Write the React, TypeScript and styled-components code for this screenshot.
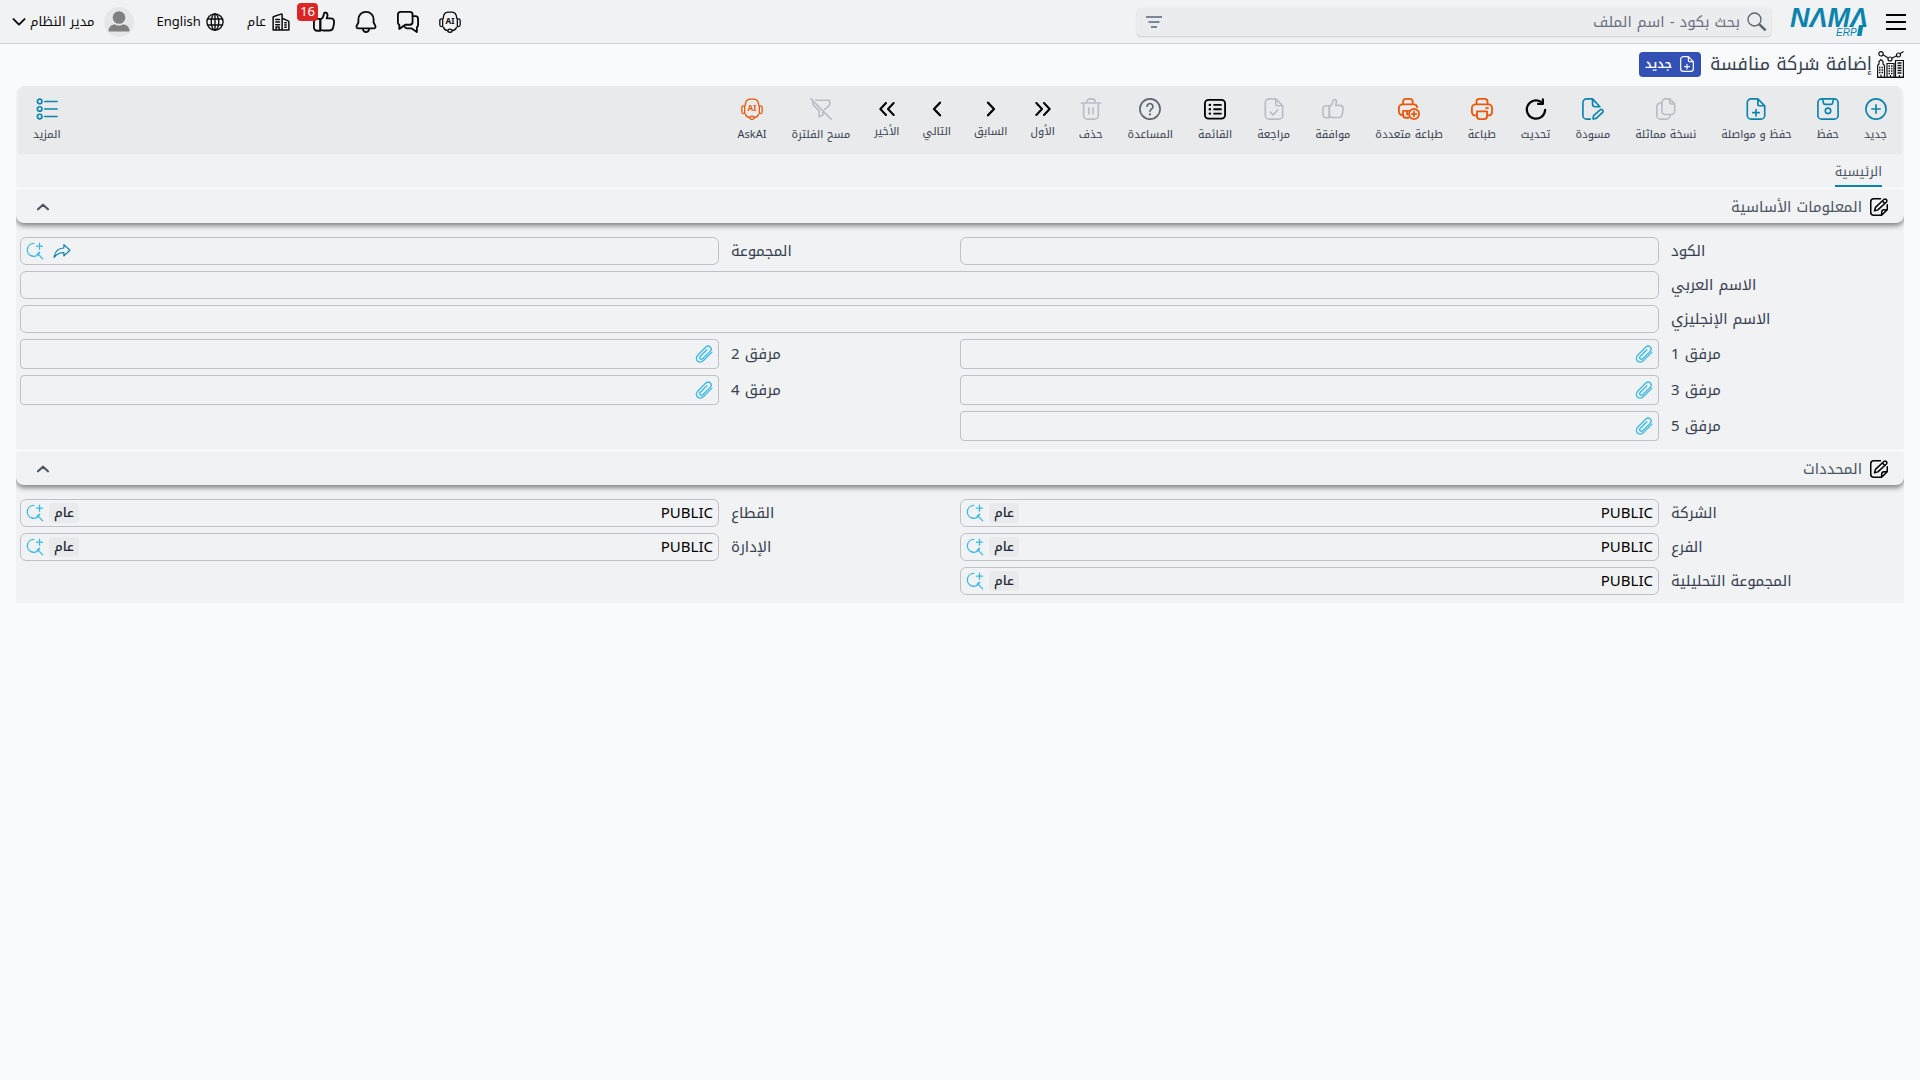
import React, { useId } from "react";
import styled, { createGlobalStyle, css } from "styled-components";

const color = {
  page: "#f8fafc",
  panel: "#f0f2f4",
  toolbar: "#e8eaeb",
  field: "#bfc1c4",
  text: "#374151",
  muted: "#4b5563",
  teal: "#0b84ad",
  sky: "#3db9e4",
  orange: "#ea580c",
  disabled: "#b9bdc6",
  ink: "#0b0b0c",
};

const GlobalStyle = createGlobalStyle`
  *, *::before, *::after { box-sizing: border-box; }
  body {
    margin: 0;
    background: ${color.page};
    color: ${color.text};
    font-family: "Noto Kufi Arabic", "Noto Sans", "DejaVu Sans", sans-serif;
    font-size: 15px;
    line-height: 20px;
  }
  button, input { font: inherit; color: inherit; }
  button { background: none; border: 0; padding: 0; cursor: pointer; }
  a { color: inherit; text-decoration: none; }
  svg { display: block; flex: none; }
`;

/* ---------- icons ---------- */

type IconProps = { size?: number; width?: number; children: React.ReactNode };

const Icon = ({ size = 22, width = 1.8, children }: IconProps) => (
  <svg
    width={size}
    height={size}
    viewBox="0 0 24 24"
    fill="none"
    stroke="currentColor"
    strokeWidth={width}
    strokeLinecap="round"
    strokeLinejoin="round"
    aria-hidden="true"
  >
    {children}
  </svg>
);

const PlusCircle = () => (
  <Icon>
    <circle cx="12" cy="12" r="11" />
    <path d="M12 7.500v9M7.500 12h9" />
  </Icon>
);
const Save = () => (
  <Icon>
    <path d="M5 1h14a4 4 0 0 1 4 4v14a4 4 0 0 1-4 4H5a4 4 0 0 1-4-4V5a4 4 0 0 1 4-4z" />
    <path d="M6 1l1 4.500q.3 1.500 1.800 1.500h6.400q1.500 0 1.800-1.500L18 1" />
    <circle cx="12" cy="14" r="3" />
  </Icon>
);
const page = "M14 1H6.500A4 4 0 0 0 2.500 5v14a4 4 0 0 0 4 4h11a4 4 0 0 0 4-4V8.500zM14 1v5.500a2 2 0 0 0 2 2h5.500";
const FilePlus = ({ size = 22 }: { size?: number }) => (
  <Icon size={size}>
    <path d={page} />
    <path d="M12 12.500v7M8.500 16h7" />
  </Icon>
);
const FileCheck = () => (
  <Icon>
    <path d={page} />
    <path d="M8 15.500l3 3 5-5.500" />
  </Icon>
);
const Copy = () => (
  <Icon>
    <path d="M16 1h-4.500A4 4 0 0 0 7.500 5v9a4 4 0 0 0 4 4h6a4 4 0 0 0 4-4V6.500zM16 1v3.500a2 2 0 0 0 2 2h3.500" />
    <path d="M7.500 5.500H6a4 4 0 0 0-4 4V19a4 4 0 0 0 4 4h6.500a4 4 0 0 0 4-4v-1" />
  </Icon>
);
const Draft = () => (
  <Icon>
    <path d="M9 23H5a4 4 0 0 1-4-4V5a4 4 0 0 1 4-4h6.500l8 8.500M11.500 1v5.500a3 3 0 0 0 3 3h5" />
    <path d="M12 22.800l.6-3.600 7.200-6.300q1.400-1 2.600.2t.1 2.600l-7 6.500z" />
  </Icon>
);
const Refresh = () => (
  <Icon width={2.4}>
    <path d="M22 13a10 10 0 1 1-4.500-8.800" />
    <path d="M19.500 1.500v5h-5.200" />
  </Icon>
);
const Printer = () => (
  <Icon width={2}>
    <path d="M6 6.500V4a3 3 0 0 1 3-3h6a3 3 0 0 1 3 3v2.500" />
    <path d="M6 19H4.500A3.500 3.500 0 0 1 1 15.500V11a4 4 0 0 1 4-4h14a4 4 0 0 1 4 4v4.500a3.500 3.500 0 0 1-3.500 3.500H18" />
    <path d="M6.500 14.500h11V20a3 3 0 0 1-3 3h-5a3 3 0 0 1-3-3zM16.500 11h2" />
  </Icon>
);
const PrinterPlus = () => (
  <Icon width={2}>
    <path d="M5.500 6.500V4a3 3 0 0 1 3-3H13a3 3 0 0 1 3 3v2.500" />
    <path d="M5.500 18.500H4.500A3.500 3.500 0 0 1 1 15V11a4 4 0 0 1 4-4h12a4 4 0 0 1 4 3" />
    <path d="M11.500 21.500H8.500a3 3 0 0 1-3-3V14h6.500M10 14v4" />
    <circle cx="17.500" cy="17.500" r="5.500" />
    <path d="M17.500 15v5M15 17.500h5" />
  </Icon>
);
const ThumbUp = ({ width = 1.8 }: { width?: number }) => (
  <Icon width={width}>
    <path d="M8 9.500c2.500-1.500 3.500-3 3.800-5.700.3-3 4-2.800 4 .5 0 1.700-.5 2.700-.9 3.700H19c2.700 0 4 1.500 4 3.700 0 2.500-.6 5.300-1.300 7.300-.6 1.700-1.800 2.300-3.700 2.300h-6.500c-1.600 0-2.500-.3-3.500-.8z" />
    <path d="M8 8.500H4.500A3.500 3.500 0 0 0 1 12v6a3.500 3.500 0 0 0 3.500 3.500H8z" />
  </Icon>
);
const ListBox = () => (
  <Icon width={2}>
    <rect x="1" y="2" width="22" height="20.500" rx="4" />
    <path d="M11 7.500h7.500M11 12.300h7.500M11 17h7.500" />
    <path d="M6.300 7.500h.2M6.300 12.300h.2M6.300 17h.2" strokeWidth="2.600" />
  </Icon>
);
const Help = () => (
  <Icon>
    <circle cx="12" cy="12" r="11" />
    <path d="M8.800 9.200a3.200 3.200 0 1 1 5 2.700c-1.200.8-1.800 1.300-1.800 2.700" />
    <path d="M12 17.900v.1" strokeWidth="2.400" />
  </Icon>
);
const Trash = () => (
  <Icon>
    <path d="M1.500 5.500h21M7.500 5.500V4a3 3 0 0 1 3-3h3a3 3 0 0 1 3 3v1.500M4 5.500V19a4 4 0 0 0 4 4h8a4 4 0 0 0 4-4V5.500M9.700 11v6.500M14.300 11v6.500" />
  </Icon>
);
const First = () => (
  <Icon size={16} width={3}>
    <path d="M2 3l8.500 9L2 21M13.500 3l8.500 9-8.500 9" />
  </Icon>
);
const Prev = () => (
  <Icon size={16} width={3.4}>
    <path d="M7.500 2.500l9 9.500-9 9.500" />
  </Icon>
);
const Next = () => (
  <Icon size={16} width={3.4}>
    <path d="M16.500 2.500l-9 9.500 9 9.500" />
  </Icon>
);
const Last = () => (
  <Icon size={16} width={3}>
    <path d="M10.500 3L2 12l8.500 9M22 3l-8.500 9 8.500 9" />
  </Icon>
);
const FilterOff = () => (
  <Icon>
    <path d="M1 1l22 22M6.500 2.500h13.300q1.800 0 1.800 1.800v2.200q0 1-.8 1.700L16 12.500M3 3.500v2.800q0 1 .8 1.700l4.700 4.500q1.500 1.400 1.500 3V20.500l4-2v-3" />
  </Icon>
);
const AskAi = () => (
  <Icon width={1.4}>
    <path d="M4.800 8V6.500Q5.500 1.200 10.500 1.200h3Q18.500 1.200 19.200 6.500V8" />
    <path d="M4 8.500H2.800Q.9 8.500.9 10.500v4.500q0 2 1.900 2H4zM20 8.500h1.200q1.900 0 1.900 2v4.500q0 2-1.900 2H20z" />
    <path d="M5 18q1 3 4.500 3.400M19 18q-1 3-4.500 3.400" />
    <ellipse cx="12" cy="21.500" rx="2.300" ry="1.700" />
    <text
      x="12"
      y="14.500"
      textAnchor="middle"
      direction="ltr"
      fontSize="9"
      fontWeight="700"
      fontFamily="Noto Sans, sans-serif"
      fill="currentColor"
      stroke="none"
    >
      AI
    </text>
  </Icon>
);
const MoreList = () => (
  <Icon width={1.8}>
    <path d="M9.500 3.800h13.500M9.500 12h13.500M9.500 20.200h13.500" />
    <circle cx="4" cy="3.800" r="2.500" />
    <circle cx="4" cy="12" r="2.500" />
    <circle cx="4" cy="20.200" r="2.500" />
  </Icon>
);
const Chat = () => (
  <Icon width={2}>
    <path d="M4 1h10a3 3 0 0 1 3 3v8a3 3 0 0 1-3 3H9l-6.500 4.500V15A3 3 0 0 1 1 12V4a3 3 0 0 1 3-3z" />
    <path d="M17 5.500h3a3 3 0 0 1 3 3v6.700a3 3 0 0 1-1.300 2.500V23l-5.700-4h-5q-1.500 0-2.500-1.500" />
  </Icon>
);
const Bell = () => (
  <Icon width={2}>
    <path d="M12 1C7 1 3.700 4.500 3.700 9v3.500L1.900 16c-.8 1.800.2 3 1.900 3h16.400c1.700 0 2.700-1.200 1.900-3l-1.800-3.500V9C20.300 4.500 17 1 12 1z" />
    <path d="M8.500 19.500c.5 2.500 2 3.500 3.500 3.500s3-1 3.500-3.500" />
  </Icon>
);
const Building = () => (
  <Icon size={18} width={2}>
    <path d="M1.500 22.500V6q0-1 1-1.300L12 1.500q1.500-.4 1.500 1v20M13.500 7l8 3.500q1 .5 1 1.500v10.500H1.500" />
    <path d="M5 8.500h5M5 12h5M5 15.500h5M17 13h2M17 16h2M17 19h2" />
    <path d="M5.500 22v-3.500h4V22" />
  </Icon>
);
const Globe = () => (
  <Icon size={18} width={1.8}>
    <circle cx="12" cy="12" r="10.800" />
    <ellipse cx="12" cy="12" rx="5" ry="10.800" />
    <path d="M2.500 8h19M2.500 16h19M12 1.200v21.600" />
  </Icon>
);
const Magnifier = () => (
  <Icon size={20} width={1.6}>
    <circle cx="9" cy="9" r="7.800" />
    <path d="M14.800 14.800l7.500 7.300" strokeWidth="3.200" strokeLinecap="butt" />
  </Icon>
);
const FilterLines = () => (
  <svg width="18" height="14" viewBox="0 0 18 14" fill="#7b8794" aria-hidden="true">
    <path d="M1 1h16v2H1zM3.500 6h11v2h-11zM6 11h6v2H6z" />
  </svg>
);
const ChevronUp = () => (
  <Icon size={16} width={3.2}>
    <path d="M4.500 15.500L12 8.500l7.500 7" />
  </Icon>
);
const ChevronDown = () => (
  <Icon size={14} width={3.2}>
    <path d="M2.500 7l9.500 9.500L21.500 7" />
  </Icon>
);
const Clip = () => (
  <Icon size={18} width={1.8}>
    <path d="M22.500 9.500L11.700 20.300c-2.700 2.700-6 3.200-8.300 1s-1.900-5.700.8-8.400L14.500 2.800c1.900-1.800 4.300-1.800 5.900-.2s1.600 4-.3 5.900L10.400 18.100c-1.100 1.100-2.500 1.200-3.500.3s-.9-2.400.2-3.500l8.700-8.700" />
  </Icon>
);
const SearchPlus = () => (
  <Icon size={18} width={1.8}>
    <path d="M10.500 1.800a8.600 8.600 0 1 0 7.800 12M16.500 16.500l5.700 6M14.800 16.200l3-2.500M18 1.500v8M14 5.500h8" />
  </Icon>
);
const Share = () => (
  <Icon size={18} width={1.6}>
    <path d="M14.500 3.500L22.500 11l-8 7.500V14C9 13.800 5 16 1.500 20.500 2.500 13 7 8.300 14.500 8z" />
  </Icon>
);
const EditSquare = () => (
  <Icon size={18} width={2}>
    <path d="M14 1H5a4 4 0 0 0-4 4v14a4 4 0 0 0 4 4h10.500L23 15.500V9M23 15.500h-4a3.500 3.500 0 0 0-3.500 3.500v4" />
    <path d="M6 17l1.300-4.500L18.500 2q1.700-1.300 3.200.1t.2 3.200L10.500 15.800zM16.500 4l3.300 3.300" />
  </Icon>
);
const Competitors = () => (
  <svg width="27" height="27" viewBox="0 0 27 27" fill="none" stroke="#111" strokeWidth="1.200" aria-hidden="true">
    <path d="M.6 26.400V14.500l1.400-1.500V10.500L4 8.500l2 2V13l1.500 1.500v11.900zM18.500 26.400V9.500h7.900v16.900zM10 26.400V12.500h7v13.900z" />
    <path d="M2 16.500h4M2 19h4M2 21.500h4M11.500 15h4M11.500 17.500h4M11.500 20h4M11.500 22.500h4" strokeDasharray="1.500 1" strokeWidth="1.500" />
    <path d="M20.500 12h4M20.500 14.500h4M20.500 17h4M20.500 19.500h4M20.500 22h4" strokeWidth="1.500" />
    <path d="M4 26.400v-3M13.500 26.400V24M22.500 26.400V24M0 26.400h27" />
    <circle cx="4" cy="2.800" r="2.200" />
    <circle cx="13" cy="8" r="2" />
    <circle cx="21.500" cy="4" r="2" />
    <path d="M6 3.800l5.200 3.200M14.800 7.200l4.900-2.400M23 2.800L26.500.5" />
  </svg>
);
const Person = () => (
  <svg width="22" height="21" viewBox="0 0 22 21" fill="#808080" aria-hidden="true">
    <circle cx="11" cy="6.500" r="6.300" />
    <path d="M.5 20.500c0-4 2-6.500 6-7.300 2.500 1.800 6.500 1.800 9 0 4 .8 6 3.300 6 7.300z" />
  </svg>
);
const Logo = () => (
  <svg width="80" height="42" viewBox="0 0 80 42" fill={color.teal} direction="ltr" role="img" aria-label="NAMA ERP">
    <text x="0" y="26" fontFamily="Liberation Sans, sans-serif" fontStyle="italic" fontWeight="700" fontSize="27">
      NΛMΛ
    </text>
    <text x="46" y="35" fontFamily="Liberation Sans, sans-serif" fontStyle="italic" fontSize="10">
      ERP
    </text>
    <path d="M69 24h4.500l-2 11h-4.500z" />
  </svg>
);

/* ---------- top bar ---------- */

const Header = styled.header`
  display: flex;
  align-items: center;
  justify-content: space-between;
  height: 44px;
  padding: 0 14px 0 12px;
  background: ${color.panel};
  border-bottom: 1px solid #cdd0d4;
  color: ${color.ink};
`;
const HeaderGroup = styled.div<{ $gap: number }>`
  display: flex;
  align-items: center;
  gap: ${(p) => p.$gap}px;
`;
const StartGroup = styled(HeaderGroup)`
  flex: 1;
`;
const MenuButton = styled.button`
  display: grid;
  gap: 5px;
  width: 20px;
  margin-left: 16px;
  span {
    height: 2px;
    background: #000;
  }
`;
const SearchBox = styled.label`
  display: flex;
  align-items: center;
  gap: 7px;
  flex: 0 1 33vw;
  height: 28px;
  margin-right: 19px;
  padding: 0 4px 0 8px;
  border-radius: 4px;
  background: #ebecee;
  box-shadow: 0 1px 2px rgba(0, 0, 0, 0.16);
  color: #5b6470;
`;
const SearchInput = styled.input`
  flex: 1;
  min-width: 0;
  height: 28px;
  padding: 0;
  border: 0;
  outline: 0;
  background: none;
  &::placeholder {
    color: #6b7280;
    opacity: 1;
  }
`;
const IconButton = styled.button`
  position: relative;
  display: grid;
  place-items: center;
`;
const Count = styled.span`
  position: absolute;
  top: -8px;
  right: 17px;
  padding: 0 3px;
  border-radius: 4px;
  background: #dc2626;
  color: #fff;
  font-size: 13px;
  line-height: 18px;
`;
const TextButton = styled.button<{ $gap: number }>`
  display: flex;
  align-items: center;
  gap: ${(p) => p.$gap}px;
  font-size: 13px;
  line-height: 20px;
  white-space: nowrap;
`;
const Avatar = styled.span`
  display: grid;
  place-items: center;
  width: 30px;
  height: 30px;
  margin-left: 5px;
  border-radius: 50%;
  background: #e5e6e8;
`;

/* ---------- page title ---------- */

const Main = styled.main`
  padding: 0 16px;
`;
const TitleRow = styled.div`
  display: flex;
  align-items: center;
  gap: 5px;
  height: 42px;
  padding: 0 0 2px;
`;
const Title = styled.h1`
  margin: 0 0 0 4px;
  font-size: 18px;
  line-height: 28px;
  font-weight: 400;
  color: ${color.text};
`;
const StatusBadge = styled.span`
  display: flex;
  align-items: center;
  gap: 7px;
  height: 25px;
  padding: 0 6px;
  border-radius: 4px;
  background: #3350b5;
  color: #fff;
  font-size: 12px;
  line-height: 16px;
  font-weight: 600;
`;

/* ---------- toolbar ---------- */

const Panel = styled.section<{ $top?: boolean }>`
  background: ${color.panel};
  border-radius: ${(p) => (p.$top ? "8px 8px 0 0" : "0")};
  margin-bottom: 4px;
  overflow-x: clip;
`;
const Toolbar = styled.div`
  display: flex;
  align-items: center;
  justify-content: space-between;
  height: 68px;
  margin: 0 2px;
  padding: 0 3px;
  border-radius: 8px 8px 0 0;
  background: ${color.toolbar};
`;
const ToolGroup = styled.div`
  display: flex;
  align-items: center;
  gap: 1px;
`;
const tones = {
  teal: color.teal,
  black: "#000",
  orange: color.orange,
  gray: "#5b6472",
  disabled: color.disabled,
};
const ToolButton = styled.button<{ $tone: keyof typeof tones; $compact?: boolean }>`
  display: flex;
  flex-direction: column;
  align-items: center;
  gap: 7px;
  padding: 0 ${(p) => (p.$compact ? 11 : 12)}px;
  color: ${color.text};
  font-size: 11px;
  line-height: 16px;
  white-space: nowrap;
  svg {
    color: ${(p) => tones[p.$tone]};
  }
`;
const Tabs = styled.nav`
  display: flex;
  height: 33px;
  padding: 0 22px;
`;
const Tab = styled.a`
  display: flex;
  align-items: center;
  padding-top: 4px;
  border-bottom: 2px solid ${color.teal};
  color: ${color.muted};
  font-size: 13px;
`;

/* ---------- sections ---------- */

const SectionHeader = styled.div`
  display: flex;
  align-items: center;
  justify-content: space-between;
  height: 32px;
  padding: 0 16px 0 19px;
  border-radius: 0 0 8px 8px;
  background: ${color.panel};
  box-shadow: 0 3px 5px rgba(0, 0, 0, 0.45);
  color: ${color.muted};
`;
const SectionTitle = styled.h2`
  display: flex;
  align-items: center;
  gap: 8px;
  margin: 0;
  font-size: 15px;
  font-weight: 400;
  svg {
    color: #000;
  }
`;
const Fields = styled.div`
  display: grid;
  grid-template-columns: 1fr 1fr;
  gap: 6px 0;
  padding: 14px 4px 8px;
`;
const FieldRow = styled.div<{ $wide?: boolean }>`
  display: flex;
  align-items: center;
  ${(p) => p.$wide && css`grid-column: 1 / -1;`}
`;
const FieldLabel = styled.label`
  flex: none;
  width: 241px;
  padding-left: 12px;
  text-align: left;
`;
const FieldFrame = styled.div<{ $tall?: boolean }>`
  display: flex;
  align-items: center;
  gap: 5px;
  flex: 1;
  min-width: 0;
  height: ${(p) => (p.$tall ? 30 : 28)}px;
  padding: 0 5px;
  border: 1px solid ${color.field};
  border-radius: ${(p) => (p.$tall ? 4 : 6)}px;
  color: ${color.sky};
`;
const FieldInput = styled.input`
  flex: 1;
  min-width: 0;
  height: 26px;
  padding: 0;
  border: 0;
  outline: 0;
  background: none;
  color: #000;
`;
const ShareButton = styled(IconButton)`
  margin-left: 4px;
  color: ${color.teal};
`;
const Chip = styled.span`
  padding: 0 5px;
  border-radius: 4px;
  background: ${color.toolbar};
  color: #1f2937;
  font-size: 13px;
  line-height: 20px;
  font-weight: 500;
`;

type FieldProps = {
  label: string;
  kind?: "text" | "file" | "lookup" | "reference";
  wide?: boolean;
};

const Field = ({ label, kind = "text", wide }: FieldProps) => {
  const id = useId();
  return (
    <FieldRow $wide={wide}>
      <FieldLabel htmlFor={id}>{label}</FieldLabel>
      <FieldFrame $tall={kind === "file"}>
        {kind === "file" && (
          <IconButton type="button" aria-label="إرفاق ملف">
            <Clip />
          </IconButton>
        )}
        <FieldInput id={id} type="text" defaultValue={kind === "reference" ? "PUBLIC" : ""} />
        {kind === "reference" && <Chip>عام</Chip>}
        {kind === "lookup" && (
          <ShareButton type="button" aria-label="فتح">
            <Share />
          </ShareButton>
        )}
        {(kind === "reference" || kind === "lookup") && (
          <IconButton type="button" aria-label="بحث">
            <SearchPlus />
          </IconButton>
        )}
      </FieldFrame>
    </FieldRow>
  );
};

const Section = ({ title, fields }: { title: string; fields: FieldProps[] }) => (
  <Panel>
    <SectionHeader>
      <SectionTitle>
        <EditSquare />
        {title}
      </SectionTitle>
      <IconButton type="button" aria-label="طي">
        <ChevronUp />
      </IconButton>
    </SectionHeader>
    <Fields>
      {fields.map((f) => (
        <Field key={f.label} {...f} />
      ))}
    </Fields>
  </Panel>
);

type Tool = { label: string; tone: keyof typeof tones; icon: React.ReactNode; compact?: boolean };

const tools: Tool[] = [
  { label: "جديد", tone: "teal", icon: <PlusCircle /> },
  { label: "حفظ", tone: "teal", icon: <Save /> },
  { label: "حفظ و مواصلة", tone: "teal", icon: <FilePlus /> },
  { label: "نسخة مماثلة", tone: "disabled", icon: <Copy /> },
  { label: "مسودة", tone: "teal", icon: <Draft /> },
  { label: "تحديث", tone: "black", icon: <Refresh /> },
  { label: "طباعة", tone: "orange", icon: <Printer /> },
  { label: "طباعة متعددة", tone: "orange", icon: <PrinterPlus /> },
  { label: "موافقة", tone: "disabled", icon: <ThumbUp /> },
  { label: "مراجعة", tone: "disabled", icon: <FileCheck /> },
  { label: "القائمة", tone: "black", icon: <ListBox /> },
  { label: "المساعدة", tone: "gray", icon: <Help /> },
  { label: "حذف", tone: "disabled", icon: <Trash /> },
  { label: "الأول", tone: "black", icon: <First />, compact: true },
  { label: "السابق", tone: "black", icon: <Prev />, compact: true },
  { label: "التالي", tone: "black", icon: <Next />, compact: true },
  { label: "الأخير", tone: "black", icon: <Last />, compact: true },
  { label: "مسح الفلترة", tone: "disabled", icon: <FilterOff /> },
  { label: "AskAI", tone: "orange", icon: <AskAi /> },
];

const basicFields: FieldProps[] = [
  { label: "الكود" },
  { label: "المجموعة", kind: "lookup" },
  { label: "الاسم العربي", wide: true },
  { label: "الاسم الإنجليزي", wide: true },
  { label: "مرفق 1", kind: "file" },
  { label: "مرفق 2", kind: "file" },
  { label: "مرفق 3", kind: "file" },
  { label: "مرفق 4", kind: "file" },
  { label: "مرفق 5", kind: "file" },
];

const dimensionFields: FieldProps[] = [
  { label: "الشركة", kind: "reference" },
  { label: "القطاع", kind: "reference" },
  { label: "الفرع", kind: "reference" },
  { label: "الإدارة", kind: "reference" },
  { label: "المجموعة التحليلية", kind: "reference" },
];

export default function App() {
  return (
    <div dir="rtl" lang="ar">
      <GlobalStyle />
      <Header>
        <StartGroup $gap={0}>
          <MenuButton type="button" aria-label="القائمة الرئيسية">
            <span />
            <span />
            <span />
          </MenuButton>
          <Logo />
          <SearchBox>
            <Magnifier />
            <SearchInput type="search" placeholder="بحث بكود - اسم الملف" />
            <FilterLines />
          </SearchBox>
        </StartGroup>
        <HeaderGroup $gap={23}>
          <HeaderGroup $gap={20}>
            <IconButton type="button" aria-label="AskAI">
              <AskAi />
            </IconButton>
            <IconButton type="button" aria-label="المحادثات">
              <Chat />
            </IconButton>
            <IconButton type="button" aria-label="التنبيهات">
              <Bell />
            </IconButton>
            <IconButton type="button" aria-label="الموافقات">
              <ThumbUp width={2} />
              <Count>16</Count>
            </IconButton>
          </HeaderGroup>
          <TextButton type="button" $gap={6}>
            <Building />
            عام
          </TextButton>
          <TextButton type="button" $gap={5}>
            <Globe />
            English
          </TextButton>
          <TextButton type="button" $gap={4}>
            <Avatar>
              <Person />
            </Avatar>
            مدير النظام
            <ChevronDown />
          </TextButton>
        </HeaderGroup>
      </Header>
      <Main>
        <TitleRow>
          <Competitors />
          <Title>إضافة شركة منافسة</Title>
          <StatusBadge>
            <FilePlus size={16} />
            جديد
          </StatusBadge>
        </TitleRow>
        <Panel $top>
          <Toolbar>
            <ToolGroup>
              {tools.map((t) => (
                <ToolButton key={t.label} type="button" $tone={t.tone} $compact={t.compact}>
                  {t.icon}
                  {t.label}
                </ToolButton>
              ))}
            </ToolGroup>
            <ToolButton type="button" $tone="teal">
              <MoreList />
              المزيد
            </ToolButton>
          </Toolbar>
          <Tabs>
            <Tab href="#main">الرئيسية</Tab>
          </Tabs>
        </Panel>
        <Section title="المعلومات الأساسية" fields={basicFields} />
        <Section title="المحددات" fields={dimensionFields} />
      </Main>
    </div>
  );
}
